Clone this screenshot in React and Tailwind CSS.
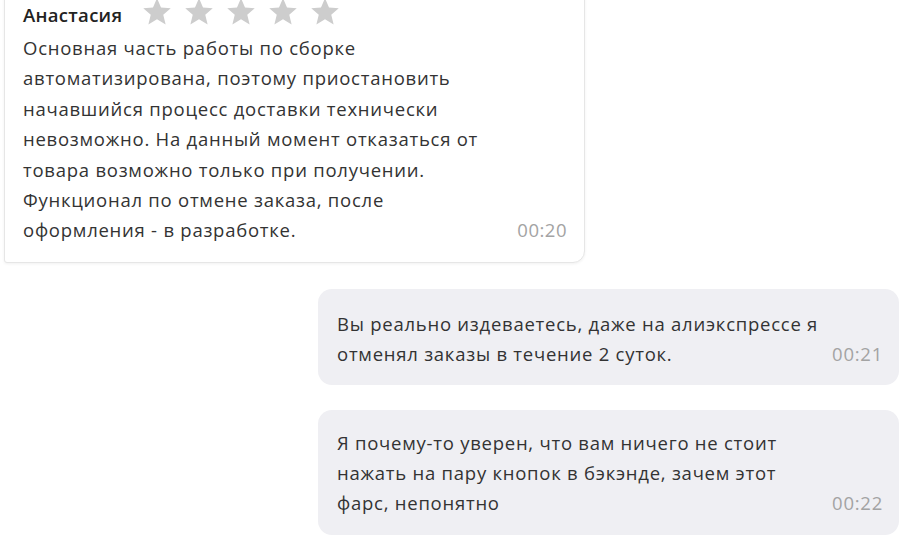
import React from "react";

const Star = () => (
  <svg viewBox="0 0 24 24" className="w-[30px] h-[30px]" fill="#cdcdcd">
    <path d="M12 1l3.2 7.3 7.8.6-6 5.2 1.9 7.8L12 17.7l-6.9 4.2 1.9-7.8-6-5.2 7.8-.6z" />
  </svg>
);

function Lines({ lines }) {
  return (
    <div>
      {lines.map((l, i) => (
        <div key={i} className="whitespace-nowrap">{l}</div>
      ))}
    </div>
  );
}

function MyBubble({ lines, time, className }) {
  return (
    <div className={"self-end w-[581px] bg-[#efeff3] rounded-[14px] pl-[19px] pr-[16px] flex items-end justify-between " + className}>
      <Lines lines={lines} />
      <span className="text-[#a3a3a3]">{time}</span>
    </div>
  );
}

function App() {
  const reply = [
    "Основная часть работы по сборке",
    "автоматизирована, поэтому приостановить",
    "начавшийся процесс доставки технически",
    "невозможно. На данный момент отказаться от",
    "товара возможно только при получении.",
    "Функционал по отмене заказа, после",
    "оформления - в разработке.",
  ];

  return (
    <div
      className="w-[900px] h-[550px] bg-white overflow-hidden flex flex-col text-[#333333] text-[18.5px] tracking-[0.75px] leading-[30.4px]"
      style={{ fontFamily: '"Open Sans", "Noto Sans", sans-serif' }}
    >
      <div className="ml-[4px] w-[581px] -mt-[10px] bg-white border border-[#e6e6e6] rounded-bl-[3px] rounded-br-[12px] shadow-[0_1px_3px_rgba(0,0,0,0.06)] pl-[18px] pr-[17px] pt-[9px] pb-[16px]">
        <div className="flex items-center gap-[20px] h-[30px]">
          <span className="font-semibold text-[#222] tracking-[0.3px]">Анастасия</span>
          <div className="flex gap-[12px] -mt-[6px]">
            <Star /><Star /><Star /><Star /><Star />
          </div>
        </div>
        <div className="flex items-end justify-between mt-[3px]">
          <Lines lines={reply} />
          <span className="text-[#a3a3a3] tracking-[0.5px]">00:20</span>
        </div>
      </div>

      <MyBubble
        className="mt-[26px] pt-[20px] pb-[15px] mr-[1px]"
        lines={["Вы реально издеваетесь, даже на алиэкспрессе я", "отменял заказы в течение 2 суток."]}
        time="00:21"
      />
      <MyBubble
        className="mt-[25px] pt-[18px] pb-[16px] mr-[1px]"
        lines={["Я почему-то уверен, что вам ничего не стоит", "нажать на пару кнопок в бэкэнде, зачем этот", "фарс, непонятно"]}
        time="00:22"
      />
    </div>
  );
}

export default App;
